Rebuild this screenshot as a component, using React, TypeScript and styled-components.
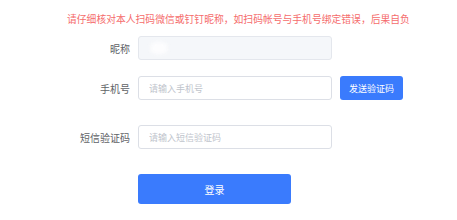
import React from "react";
import styled, { createGlobalStyle } from "styled-components";

const Global = createGlobalStyle`
  html, body { margin: 0; padding: 0; background: #fff; }
  body { font-family: "Noto Sans CJK SC", "Noto Sans", sans-serif; }
  * { box-sizing: border-box; }
`;

const Page = styled.div`
  width: 457px;
  height: 220px;
  padding-top: 12px;
  padding-left: 67px;
`;

const Warning = styled.div`
  color: #f56c6c;
  font-size: 9.8px;
  line-height: 14px;
  height: 14px;
  white-space: nowrap;
`;

const Form = styled.div`
  margin-left: 3px;
  display: flex;
  flex-direction: column;
`;

const Row = styled.div<{ $top: number }>`
  display: flex;
  align-items: center;
  margin-top: ${(p) => p.$top}px;
  height: 24px;
`;

const Label = styled.label`
  width: 60px;
  margin-right: 8px;
  text-align: right;
  font-size: 10px;
  color: #606266;
  white-space: nowrap;
`;

const Input = styled.input<{ $disabled?: boolean }>`
  width: 194px;
  height: 24px;
  border: 1px solid ${(p) => (p.$disabled ? "#e4e7ed" : "#dcdfe6")};
  background: ${(p) => (p.$disabled ? "#f5f7fa" : "#fff")};
  border-radius: 3px;
  padding: 0 10px;
  font-family: inherit;
  font-size: 9px;
  color: #606266;
  outline: none;
  &::placeholder { color: #c0c4cc; }
`;

const SendButton = styled.button`
  margin-left: 8px;
  width: 63px;
  height: 24px;
  border: none;
  border-radius: 3px;
  background: #3a7bfd;
  color: #fff;
  font-family: inherit;
  font-size: 9px;
  padding: 0;
`;

const LoginButton = styled.button`
  align-self: flex-start;
  margin-top: 25px;
  margin-left: 68px;
  width: 153px;
  height: 30px;
  border: none;
  border-radius: 3px;
  background: #3a7bfd;
  color: #fff;
  font-family: inherit;
  font-size: 10px;
  padding: 0;
`;

const BlurValue = styled.span`
  position: absolute;
  left: 12px;
  top: 6px;
  width: 18px;
  height: 12px;
  border-radius: 6px;
  background: #fdfdfe;
  filter: blur(2px);
`;

const Field = styled.div`
  position: relative;
  display: flex;
`;

export default function App() {
  return (
    <>
      <Global />
      <Page>
        <Warning>请仔细核对本人扫码微信或钉钉昵称，如扫码帐号与手机号绑定错误，后果自负</Warning>
        <Form>
          <Row $top={10}>
            <Label>昵称</Label>
            <Field>
              <Input $disabled disabled />
              <BlurValue />
            </Field>
          </Row>
          <Row $top={16}>
            <Label>手机号</Label>
            <Input placeholder="请输入手机号" />
            <SendButton>发送验证码</SendButton>
          </Row>
          <Row $top={25}>
            <Label>短信验证码</Label>
            <Input placeholder="请输入短信验证码" />
          </Row>
          <LoginButton>登录</LoginButton>
        </Form>
      </Page>
    </>
  );
}
